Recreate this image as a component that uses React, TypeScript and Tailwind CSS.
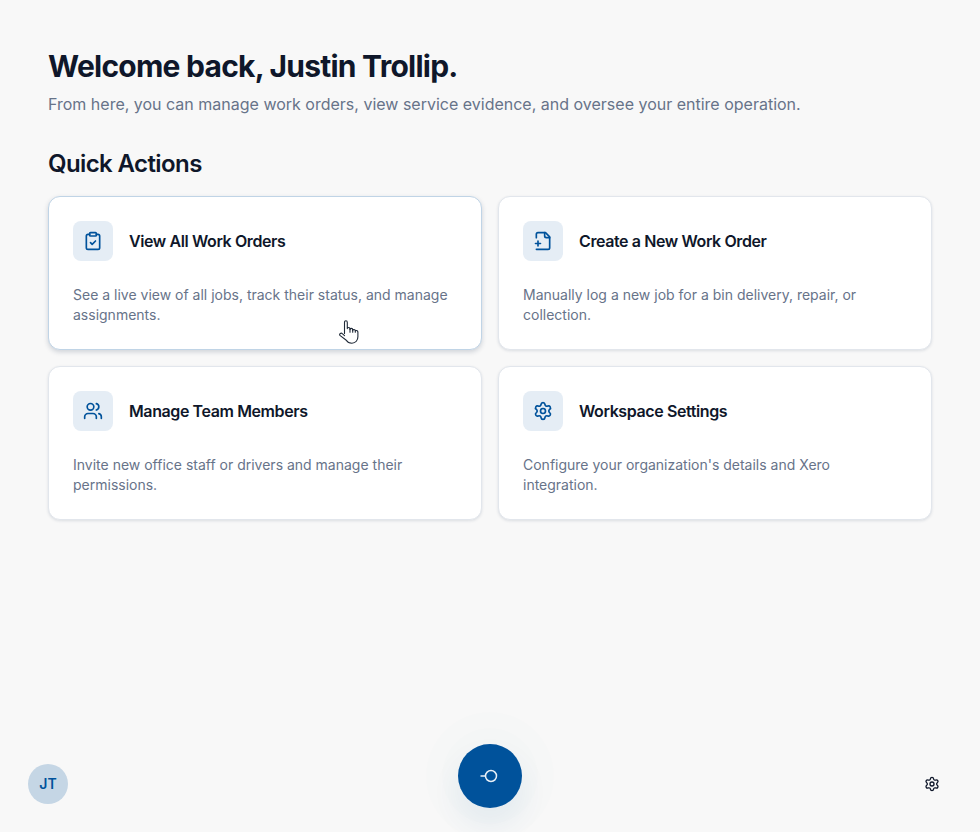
import { ClipboardCheck, Settings, Users } from "lucide-react";
import type { ComponentType } from "react";

type IconProps = { className?: string; strokeWidth?: number };

function FileAdd({ className, strokeWidth = 2 }: IconProps) {
  return (
    <svg
      className={className}
      viewBox="0 0 24 24"
      fill="none"
      stroke="currentColor"
      strokeWidth={strokeWidth}
      strokeLinecap="round"
      strokeLinejoin="round"
    >
      <path d="M4 22h14a2 2 0 0 0 2-2V7l-5-5H6a2 2 0 0 0-2 2v4" />
      <path d="M14 2v4a2 2 0 0 0 2 2h4" />
      <path d="M3 15h6" />
      <path d="M6 12v6" />
    </svg>
  );
}

type Action = {
  title: string;
  text: string;
  Icon: ComponentType<IconProps>;
  hovered?: boolean;
};

const actions: Action[] = [
  {
    title: "View All Work Orders",
    text: "See a live view of all jobs, track their status, and manage assignments.",
    Icon: ClipboardCheck,
    hovered: true,
  },
  {
    title: "Create a New Work Order",
    text: "Manually log a new job for a bin delivery, repair, or collection.",
    Icon: FileAdd,
  },
  {
    title: "Manage Team Members",
    text: "Invite new office staff or drivers and manage their permissions.",
    Icon: Users,
  },
  {
    title: "Workspace Settings",
    text: "Configure your organization's details and Xero integration.",
    Icon: Settings,
  },
];

function Card({ title, text, Icon, hovered }: Action) {
  return (
    <div
      className={
        hovered
          ? "h-[154px] rounded-xl border border-[#c0d4e6] bg-white p-6 shadow-[0_2px_5px_rgba(15,40,70,0.18)]"
          : "h-[154px] rounded-xl border border-[#e2e6ec] bg-white p-6 shadow-[0_1px_3px_rgba(15,40,70,0.12)]"
      }
    >
      <div className="flex items-center gap-4">
        <div className="flex h-10 w-10 items-center justify-center rounded-lg bg-[#e5edf5] text-[#00529b]">
          <Icon className="h-5 w-5" strokeWidth={2} />
        </div>
        <h3 className="text-base font-semibold tracking-[-0.4px] text-[#0f172a]">{title}</h3>
      </div>
      <p className="mt-6 text-sm leading-5 text-[#677389]">{text}</p>
    </div>
  );
}

export default function App() {
  return (
    <div className="relative flex h-[832px] flex-col overflow-hidden bg-[#f8f8f8] font-['Inter',sans-serif]">
      <main className="flex-1 px-12 pt-12">
        <h1 className="text-[30px] leading-9 font-bold tracking-[-0.75px] text-[#0f172a]">
          Welcome back, Justin Trollip.
        </h1>
        <p className="mt-2 text-base leading-6 text-[#677389]">
          From here, you can manage work orders, view service evidence, and oversee your entire operation.
        </p>
        <h2 className="mt-8 text-2xl leading-8 font-semibold tracking-[-0.6px] text-[#0f172a]">
          Quick Actions
        </h2>
        <div className="mt-4 grid grid-cols-2 gap-4">
          {actions.map((a) => (
            <Card key={a.title} {...a} />
          ))}
        </div>
      </main>

      <footer className="flex items-center justify-between pr-7 pb-7 pl-7">
        <div className="flex h-10 w-10 items-center justify-center rounded-full bg-[#c5d6e5] text-sm font-semibold text-[#00529b]">
          JT
        </div>
        <div className="flex h-10 w-10 items-center justify-center text-[#0f172a]">
          <Settings className="h-4 w-4" strokeWidth={2} />
        </div>
      </footer>

      <div className="absolute bottom-6 left-[458px] flex h-16 w-16 items-center justify-center rounded-full bg-[#00529b] shadow-[0_16px_26px_4px_rgba(0,82,155,0.06),0_0_0_16px_rgba(0,82,155,0.006),0_0_0_32px_rgba(0,82,155,0.008)]">
        <svg width="20" height="20" viewBox="0 0 20 20" fill="none" stroke="#e8f0f7" strokeWidth="1.5">
          <circle cx="11" cy="10" r="5.5" />
          <path d="M0.5 10h5" />
        </svg>
      </div>

      <svg
        className="absolute top-[320px] left-[339px]"
        width="20"
        height="24"
        viewBox="0 0 20 24"
        fill="#fff"
        stroke="#1f2937"
        strokeWidth="1.1"
        strokeLinejoin="round"
        strokeLinecap="round"
      >
        <path d="M5.5 13.5V2.4C5.5 1.3 6.1.7 6.9.7S8.3 1.3 8.3 2.4V8.6c0-1.5 2.7-1.5 2.7 0v.9c0-1.5 2.7-1.5 2.7 0v1c0-1.4 2.6-1.4 2.6.2 1.7-.6 2.6.2 2.6 1.5v4.6c0 3.3-2.2 6.4-6 6.4-3 0-4.4-1-5.6-3L.9 15.4c-.9-1.5 1.2-3 2.4-1.7l2.2 2" />
        <path d="M11 8.6v3.6M13.7 9.5v2.7M16.3 10.7v1.6" fill="none" />
      </svg>
    </div>
  );
}
